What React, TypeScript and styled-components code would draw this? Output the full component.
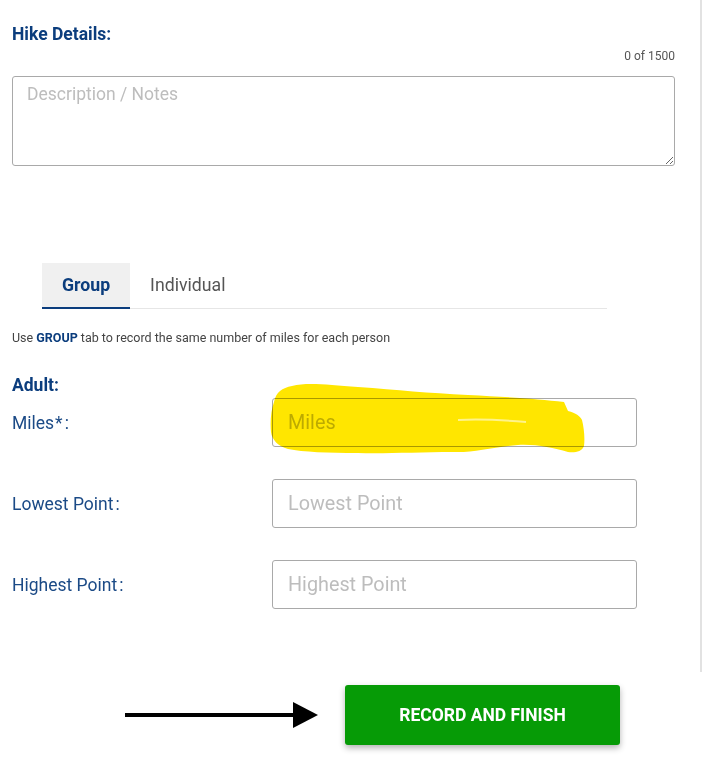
import React from "react"
import styled, { createGlobalStyle } from "styled-components"

const GlobalStyle = createGlobalStyle`
    body {
        margin: 0;
        background: #ffffff;
        font-family: Roboto, "Liberation Sans", Arial, sans-serif;
    }
`

const fields: Array<{ label: string; mark?: string; placeholder: string; highlighted?: boolean }> = [
    { label: 'Miles', mark: '*', placeholder: 'Miles', highlighted: true },
    { label: 'Lowest Point', placeholder: 'Lowest Point' },
    { label: 'Highest Point', placeholder: 'Highest Point' },
]

export default function App() {
    return (
        <Page>
            <GlobalStyle />
            <Content>
                <Heading>Hike Details:</Heading>
                <Counter>0 of 1500</Counter>
                <Notes placeholder="Description / Notes" />

                <TabBar>
                    <Tab $active>Group</Tab>
                    <Tab>Individual</Tab>
                </TabBar>
                <Hint>Use <b>GROUP</b> tab to record the same number of miles for each person</Hint>

                <SubHeading>Adult:</SubHeading>
                <Fields>
                    {fields.map((f) => (
                        <FieldRow key={f.label}>
                            <Label>
                                {f.label}
                                {f.mark && <Star>{f.mark}</Star>}
                                <Colon>:</Colon>
                            </Label>
                            <InputWrap>
                                <Input placeholder={f.placeholder} />
                                {f.highlighted && <Scribble />}
                            </InputWrap>
                        </FieldRow>
                    ))}
                </Fields>

                <Actions>
                    <Arrow />
                    <SubmitButton>RECORD AND FINISH</SubmitButton>
                </Actions>
            </Content>
            <Divider />
        </Page>
    )
}

const Scribble = () => (
    <ScribbleSvg width="330" height="80" viewBox="0 0 330 80">
        <path
            d="M6 22 C8 12 14 8 24 6 C40 2 60 5 90 7 C130 10 160 13 200 15 C240 17 270 19 296 22 L300 31 C308 33 312 36 314 40 C316 48 317 58 316 66 C314 72 306 73 300 72 C285 68 268 64 250 65 C225 67 205 73 185 72 C150 72 115 74 90 73 C60 73 35 72 20 69 C10 66 4 60 3 52 C2 42 3 30 6 22 Z"
            fill="#ffe600"
        />
        <path d="M190 40 C210 39 235 40 258 42" stroke="#fff38a" strokeWidth="2" fill="none" />
    </ScribbleSvg>
)

const Arrow = () => (
    <svg width="196" height="30" viewBox="0 0 196 30">
        <rect x="0" y="13" width="172" height="4" fill="#000" />
        <polygon points="168,2 193,15 168,28" fill="#000" />
    </svg>
)

const Page = styled.div`
    display: flex;
    align-items: flex-start;
    width: 702px;
`
const Content = styled.div`
    width: 700px;
    box-sizing: border-box;
    padding: 24px 25px 20px 12px;
    display: flex;
    flex-direction: column;
`
const Divider = styled.div`
    width: 2px;
    height: 672px;
    background: #e2e2e2;
`
const Heading = styled.h2`
    margin: 0;
    font-size: 17.5px;
    line-height: 20px;
    font-weight: 700;
    color: #0b3d7d;
`
const Counter = styled.div`
    margin-top: 4px;
    align-self: flex-end;
    font-size: 12px;
    line-height: 16px;
    color: #555;
`
const Notes = styled.textarea`
    margin-top: 12px;
    height: 90px;
    box-sizing: border-box;
    padding: 7px 14px;
    border: 1px solid #a9a9a9;
    border-radius: 3px;
    font-family: Roboto, "Liberation Sans", Arial, sans-serif;
    font-size: 17.5px;
    resize: vertical;
    outline: none;
    &::placeholder {
        color: #bdbdbd;
    }
`
const TabBar = styled.div`
    margin: 97px 0 0 30px;
    width: 565px;
    display: flex;
    border-bottom: 1px solid #e6e6e6;
`
const Tab = styled.div<{ $active?: boolean }>`
    height: 44px;
    padding: 0 20px;
    display: flex;
    align-items: center;
    font-size: 17.7px;
    font-weight: ${({ $active }) => ($active ? 700 : 400)};
    color: ${({ $active }) => ($active ? '#0b3d7d' : '#555')};
    background: ${({ $active }) => ($active ? '#f0f0f0' : 'transparent')};
    border-bottom: 2px solid ${({ $active }) => ($active ? '#0b3d7d' : 'transparent')};
    margin-bottom: -1px;
`
const Hint = styled.p`
    margin: 21px 0 0;
    font-size: 12.5px;
    line-height: 16px;
    color: #444;
    b {
        color: #0b3d7d;
        font-weight: 700;
    }
`
const SubHeading = styled.h3`
    margin: 29px 0 0;
    font-size: 17.5px;
    line-height: 20px;
    font-weight: 700;
    color: #0b3d7d;
`
const Fields = styled.div`
    margin-top: 3px;
    display: flex;
    flex-direction: column;
    gap: 32px;
`
const FieldRow = styled.div`
    display: grid;
    grid-template-columns: 260px 365px;
    align-items: center;
`
const Label = styled.label`
    font-size: 17.5px;
    color: #1b4a86;
`
const Star = styled.span`
    margin-left: 1px;
`
const Colon = styled.span`
    margin-left: 2px;
`
const InputWrap = styled.div`
    position: relative;
`
const Input = styled.input`
    display: block;
    width: 100%;
    height: 49px;
    box-sizing: border-box;
    padding: 0 15px;
    border: 1px solid #a9a9a9;
    border-radius: 3px;
    font-family: Roboto, "Liberation Sans", Arial, sans-serif;
    font-size: 19.8px;
    outline: none;
    &::placeholder {
        color: #bdbdbd;
    }
`
const ScribbleSvg = styled.svg`
    position: absolute;
    left: -4px;
    top: -18px;
    mix-blend-mode: multiply;
    pointer-events: none;
`
const Actions = styled.div`
    margin-top: 76px;
    padding-left: 113px;
    display: flex;
    align-items: center;
    gap: 24px;
`
const SubmitButton = styled.button`
    width: 275px;
    height: 60px;
    border: none;
    border-radius: 3px;
    background: #069b06;
    color: #fff;
    font-family: Roboto, "Liberation Sans", Arial, sans-serif;
    font-size: 17.5px;
    font-weight: 700;
    box-shadow: 0 3px 6px rgba(0, 0, 0, 0.3);
    cursor: pointer;
`
